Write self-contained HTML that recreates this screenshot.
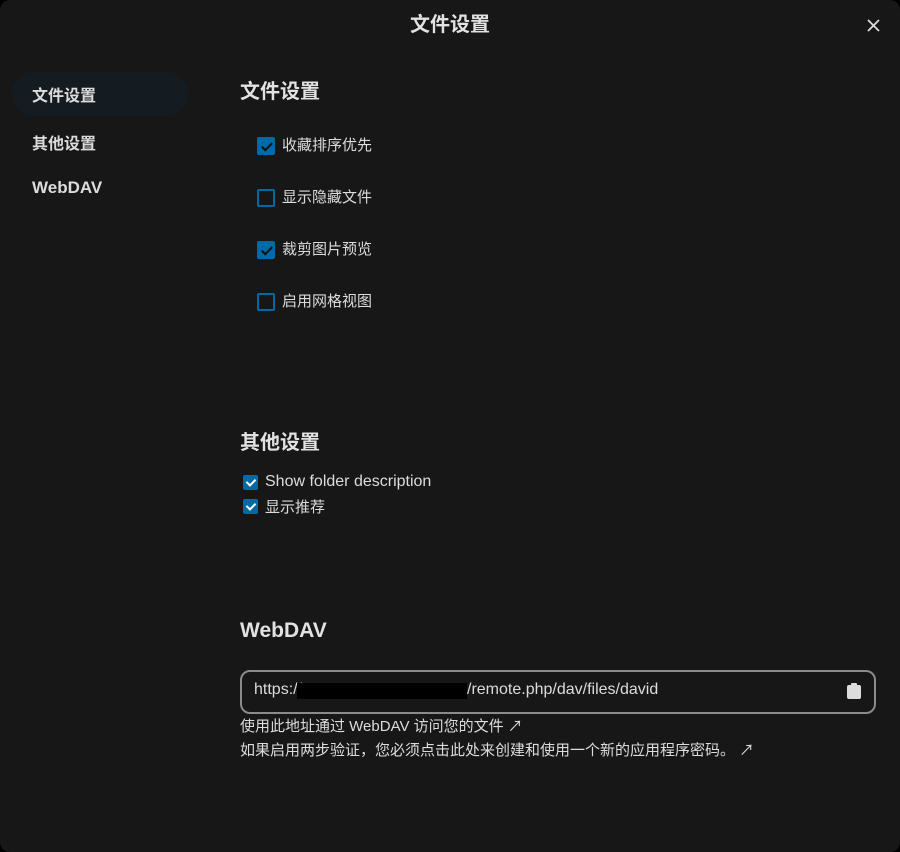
<!DOCTYPE html>
<html><head><meta charset="utf-8"><style>
body{margin:0;background:#000;width:900px;height:852px;overflow:hidden;font-family:"Liberation Sans","Noto Sans CJK SC",sans-serif;color:#dcdcdc}
.m{position:absolute;left:0;top:0;width:900px;height:852px;background:#171717;border-radius:10px}
.a{position:absolute;white-space:nowrap}
.cb{position:absolute;width:18px;height:18px;border:2px solid #0069a8;border-radius:2px;box-sizing:border-box}
.on{background:#0069a8}
.on::after{content:"";position:absolute;left:5px;top:1px;width:4px;height:9px;border:solid #111;border-width:0 2px 2px 0;transform:rotate(45deg)}
.sm{width:15px;height:15px;background:#0069a8;border:none}
.sm::after{border-color:#fff;left:5px;top:2px;height:7px}
h2{margin:0;font-size:20px;font-weight:bold;color:#e2e2e2}
</style></head><body><div class="m">
<div class="a" style="left:0;width:900px;text-align:center;top:8px;font-size:20px;font-weight:bold;color:#e2e2e2">文件设置</div>
<svg class="a" style="left:867px;top:19px" width="13" height="13"><path d="M1 1L12 12M12 1L1 12" stroke="#ddd" stroke-width="1.8"/></svg>
<div class="a" style="left:12px;top:72px;width:176px;height:44px;border-radius:22px;background:#141c21"></div>
<div class="a" style="left:32px;top:82px;font-size:16px;font-weight:bold">文件设置</div>
<div class="a" style="left:32px;top:130px;font-size:16px;font-weight:bold">其他设置</div>
<div class="a" style="left:32px;top:178px;font-size:17px;font-weight:bold">WebDAV</div>
<h2 class="a" style="left:240px;top:75px">文件设置</h2>
<div class="cb on" style="left:257px;top:137px"></div><div class="a" style="left:282px;top:134px;font-size:15px">收藏排序优先</div>
<div class="cb" style="left:257px;top:189px"></div><div class="a" style="left:282px;top:186px;font-size:15px">显示隐藏文件</div>
<div class="cb on" style="left:257px;top:241px"></div><div class="a" style="left:282px;top:238px;font-size:15px">裁剪图片预览</div>
<div class="cb" style="left:257px;top:293px"></div><div class="a" style="left:282px;top:290px;font-size:15px">启用网格视图</div>
<h2 class="a" style="left:240px;top:426px">其他设置</h2>
<div class="cb on sm" style="left:243px;top:475px"></div><div class="a" style="left:265px;top:473px;font-size:16px">Show folder description</div>
<div class="cb on sm" style="left:243px;top:499px"></div><div class="a" style="left:265px;top:496px;font-size:15px">显示推荐</div>
<h2 class="a" style="left:240px;top:619px;font-size:21px">WebDAV</h2>
<div class="a" style="left:240px;top:670px;width:636px;height:44px;border:2px solid #8b8b8b;border-radius:10px;box-sizing:border-box"></div>
<div class="a" style="left:254px;top:681px;font-size:16px">https://c</div>
<div class="a" style="left:297px;top:683px;width:170px;height:16px;background:#000"></div>
<div class="a" style="left:467px;top:681px;font-size:16px">/remote.php/dav/files/david</div>
<svg class="a" style="left:846px;top:682px" width="16" height="18"><rect x="1" y="3" width="14" height="14" rx="2" fill="#ddd"/><rect x="5" y="1" width="6" height="4" rx="1" fill="#ddd"/></svg>
<div class="a" style="left:240px;top:715px;font-size:15px">使用此地址通过 WebDAV 访问您的文件 ↗</div>
<div class="a" style="left:240px;top:739px;font-size:15px">如果启用两步验证，您必须点击此处来创建和使用一个新的应用程序密码。 ↗</div>
</div></body></html>
